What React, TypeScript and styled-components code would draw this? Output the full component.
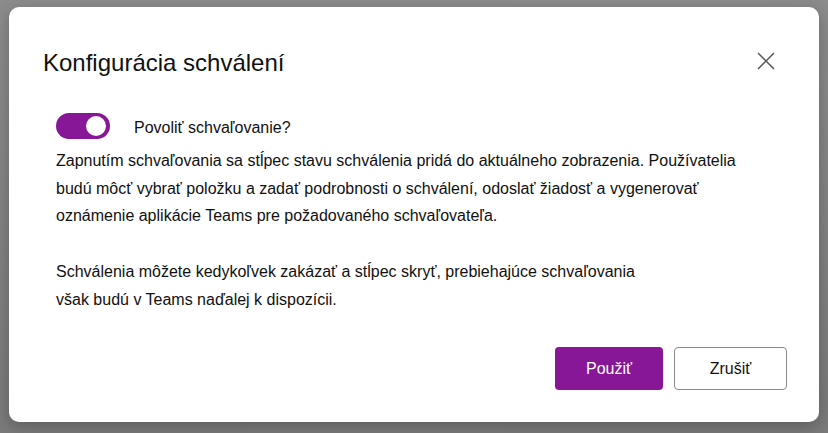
import React, { useState } from "react";
import styled, { createGlobalStyle } from "styled-components";

const GlobalStyle = createGlobalStyle`
  html, body {
    margin: 0;
    padding: 0;
    background: linear-gradient(180deg, #8c8c8c 0%, #7a7a7a 100%);
    height: 100%;
  }
  body {
    font-family: "Liberation Sans", Arial, sans-serif;
  }
  #root {
    padding: 7px 9px 0 9px;
  }
`;

const Dialog = styled.div`
  width: 810px;
  height: 415px;
  box-sizing: border-box;
  background: #ffffff;
  border-radius: 10px;
  box-shadow: 0 4px 16px rgba(0, 0, 0, 0.25);
  display: flex;
  flex-direction: column;
`;

const Header = styled.div`
  display: flex;
  align-items: center;
  justify-content: space-between;
  padding: 41px 44px 0 34px;
  height: 30px;
`;

const Title = styled.h1`
  margin: 0;
  font-size: 24px;
  font-weight: 400;
  line-height: 30px;
  color: #111;
`;

const CloseButton = styled.button`
  width: 18px;
  height: 18px;
  padding: 0;
  border: none;
  background: none;
  cursor: pointer;
  display: flex;
  margin-top: -4px;
`;

const Body = styled.div`
  padding: 35px 44px 0 47px;
  flex: 1;
`;

const ToggleRow = styled.label`
  display: flex;
  align-items: center;
  gap: 24px;
  cursor: pointer;
`;

const Track = styled.span<{ $on: boolean }>`
  width: 54px;
  height: 26px;
  border-radius: 13px;
  box-sizing: border-box;
  background: ${(p) => (p.$on ? "#881798" : "#ffffff")};
  border: ${(p) => (p.$on ? "none" : "1px solid #666")};
  display: flex;
  align-items: center;
  justify-content: ${(p) => (p.$on ? "flex-end" : "flex-start")};
  padding: 0 4px;
`;

const Knob = styled.span<{ $on: boolean }>`
  width: 20px;
  height: 20px;
  border-radius: 50%;
  background: ${(p) => (p.$on ? "#ffffff" : "#666")};
`;

const ToggleLabel = styled.span`
  font-size: 16px;
  color: #111;
  margin-top: 3px;
`;

const Text = styled.p`
  margin: 8px 0 0 0;
  font-size: 16px;
  line-height: 27.5px;
  color: #111;

  & + & {
    margin-top: 28.5px;
  }
`;

const Footer = styled.div`
  display: flex;
  justify-content: flex-end;
  gap: 11px;
  padding: 0 32px 32px 0;
`;

const Button = styled.button<{ $primary?: boolean }>`
  height: 43px;
  width: ${(p) => (p.$primary ? "108px" : "113px")};
  border-radius: 4px;
  font-family: "Liberation Sans", Arial, sans-serif;
  font-size: 16px;
  cursor: pointer;
  background: ${(p) => (p.$primary ? "#881798" : "#ffffff")};
  color: ${(p) => (p.$primary ? "#ffffff" : "#111")};
  border: ${(p) => (p.$primary ? "none" : "1px solid #8a8a8a")};
`;

export default function App() {
  const [on, setOn] = useState(true);

  return (
    <>
      <GlobalStyle />
      <Dialog>
        <Header>
          <Title>Konfigurácia schválení</Title>
          <CloseButton aria-label="Zavrieť">
            <svg width="18" height="18" viewBox="0 0 18 18">
              <path d="M1 1 L17 17 M17 1 L1 17" stroke="#555" strokeWidth="1.5" fill="none" />
            </svg>
          </CloseButton>
        </Header>
        <Body>
          <ToggleRow onClick={() => setOn(!on)}>
            <Track $on={on}>
              <Knob $on={on} />
            </Track>
            <ToggleLabel>Povoliť schvaľovanie?</ToggleLabel>
          </ToggleRow>
          <Text>
            Zapnutím schvaľovania sa stĺpec stavu schválenia pridá do aktuálneho zobrazenia. Používatelia
            budú môcť vybrať položku a zadať podrobnosti o schválení, odoslať žiadosť a vygenerovať
            oznámenie aplikácie Teams pre požadovaného schvaľovateľa.
          </Text>
          <Text>
            Schválenia môžete kedykoľvek zakázať a stĺpec skryť, prebiehajúce schvaľovania
            <br />
            však budú v Teams naďalej k dispozícii.
          </Text>
        </Body>
        <Footer>
          <Button $primary>Použiť</Button>
          <Button>Zrušiť</Button>
        </Footer>
      </Dialog>
    </>
  );
}
